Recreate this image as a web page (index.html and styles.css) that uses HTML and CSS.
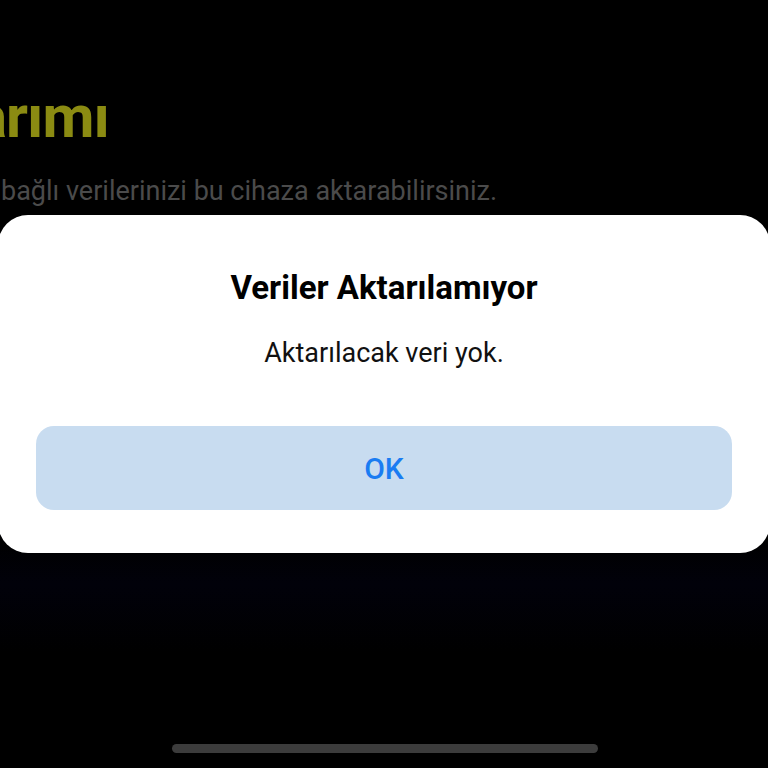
FILE: index.html
```html
<!DOCTYPE html>
<html lang="tr">
<head>
<meta charset="utf-8">
<link rel="stylesheet" href="styles.css">
</head>
<body>
<div class="screen">
  <header class="page-head">
    <h1 class="page-title">arımı</h1>
    <p class="page-sub">bağlı verilerinizi bu cihaza aktarabilirsiniz.</p>
  </header>
  <div class="dialog" role="alertdialog">
    <h2 class="dialog-title">Veriler Aktarılamıyor</h2>
    <p class="dialog-msg">Aktarılacak veri yok.</p>
    <button class="dialog-btn">OK</button>
  </div>
  <div class="home-bar"></div>
</div>
</body>
</html>
```
FILE: styles.css
```css
html, body {
  margin: 0;
  padding: 0;
  background: #000;
}
.screen {
  position: relative;
  width: 768px;
  height: 768px;
  overflow: hidden;
  background: linear-gradient(180deg, #000 0%, #000 70%, #01010a 76%, #000 85%);
  font-family: Roboto, "Noto Sans", sans-serif;
}
.page-head {
  padding-top: 84px;
}
.page-title {
  margin: 0 0 0 -25px;
  font-size: 60px;
  line-height: 66px;
  font-weight: 700;
  color: #8b8b12;
  letter-spacing: -1px;
  white-space: nowrap;
}
.page-sub {
  margin: 24px 0 0 1px;
  font-size: 27px;
  line-height: 34px;
  color: #4b4b4b;
  white-space: nowrap;
}
.dialog {
  position: absolute;
  left: -2px;
  top: 215px;
  width: 772px;
  height: 338px;
  box-sizing: border-box;
  padding: 54px 38px 43px;
  background: #fff;
  border-radius: 30px;
  display: flex;
  flex-direction: column;
  align-items: center;
}
.dialog-title {
  margin: 0;
  font-size: 33px;
  line-height: 38px;
  font-weight: 700;
  color: #000;
}
.dialog-msg {
  margin: 28px 0 0;
  font-size: 27px;
  line-height: 36px;
  color: #111;
}
.dialog-btn {
  margin-top: auto;
  width: 100%;
  height: 84px;
  border: 0;
  border-radius: 18px;
  background: #c8dcf0;
  color: #1a7cf2;
  font-family: Roboto, "Noto Sans", sans-serif;
  font-size: 30px;
  font-weight: 500;
  padding: 0;
}
.home-bar {
  position: absolute;
  left: 172px;
  top: 744px;
  width: 426px;
  height: 9px;
  border-radius: 5px;
  background: #3c3c3c;
}
```
